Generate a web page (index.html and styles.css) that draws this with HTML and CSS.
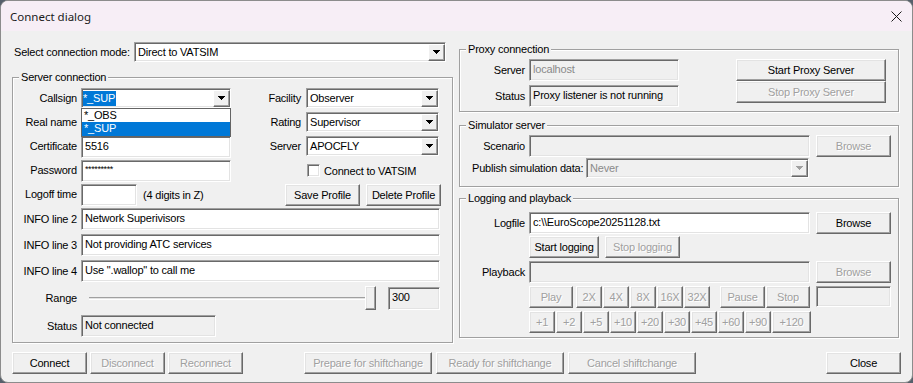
FILE: index.html
```html
<!DOCTYPE html>
<html lang="en">
<head>
    <meta charset="UTF-8">
    <title>Connect dialog</title>
    <link rel="stylesheet" href="styles.css">
</head>
<body>
<div class="window">
    <div class="titlebar">
        <span class="title">Connect dialog</span>
        <svg class="close" width="11" height="11" viewBox="0 0 11 11"><path d="M0.5 0.5L10.5 10.5M10.5 0.5L0.5 10.5" stroke="#1a1a1a" stroke-width="1"/></svg>
    </div>

    <div class="client">
        <div class="main">
            <!-- left side -->
            <div class="col-left">
                <div class="mode-row">
                    <span class="mode-label">Select connection mode:</span>
                    <div class="combo mode-combo"><span class="val">Direct to VATSIM</span><span class="arrow"><svg width="7" height="4"><path d="M0 0h7v1h-1v1h-1v1h-1v1h-1v-1h-1v-1h-1v-1h-1z"/></svg></span></div>
                </div>

                <div class="group server-group">
                    <div class="group-title">Server connection</div>
                    <div class="server-grid">
                        <span class="lbl">Callsign</span>
                        <div class="drop-cell">
                            <div class="combo"><span class="val sel">*_SUP</span><span class="arrow"><svg width="7" height="4"><path d="M0 0h7v1h-1v1h-1v1h-1v1h-1v-1h-1v-1h-1v-1h-1z"/></svg></span></div>
                            <ul class="droplist">
                                <li>*_OBS</li>
                                <li class="hi">*_SUP</li>
                            </ul>
                        </div>
                        <span class="lbl lbl2">Facility</span>
                        <div class="combo"><span class="val">Observer</span><span class="arrow"><svg width="7" height="4"><path d="M0 0h7v1h-1v1h-1v1h-1v1h-1v-1h-1v-1h-1v-1h-1z"/></svg></span></div>

                        <span class="lbl">Real name</span>
                        <div class="edit"></div>
                        <span class="lbl lbl2">Rating</span>
                        <div class="combo"><span class="val">Supervisor</span><span class="arrow"><svg width="7" height="4"><path d="M0 0h7v1h-1v1h-1v1h-1v1h-1v-1h-1v-1h-1v-1h-1z"/></svg></span></div>

                        <span class="lbl">Certificate</span>
                        <div class="edit">5516</div>
                        <span class="lbl lbl2">Server</span>
                        <div class="combo"><span class="val">APOCFLY</span><span class="arrow"><svg width="7" height="4"><path d="M0 0h7v1h-1v1h-1v1h-1v1h-1v-1h-1v-1h-1v-1h-1z"/></svg></span></div>

                        <span class="lbl">Password</span>
                        <div class="edit pw">*********</div>
                        <span></span>
                        <div class="check"><span class="box"></span>Connect to VATSIM</div>

                        <span class="lbl">Logoff time</span>
                        <div class="logoff"><div class="edit short"></div><span>(4 digits in Z)</span></div>
                        <div class="profile-btns">
                            <button class="btn">Save Profile</button>
                            <button class="btn">Delete Profile</button>
                        </div>
                    </div>

                    <div class="frow info"><span class="lbl">INFO line 2</span><div class="edit wide">Network Superivisors</div></div>
                    <div class="frow info"><span class="lbl">INFO line 3</span><div class="edit wide">Not providing ATC services</div></div>
                    <div class="frow info"><span class="lbl">INFO line 4</span><div class="edit wide">Use ".wallop" to call me</div></div>
                    <div class="frow range">
                        <span class="lbl">Range</span>
                        <div class="slider"><span class="track"></span><span class="thumb"></span></div>
                        <div class="edit ro value">300</div>
                    </div>
                    <div class="frow status"><span class="lbl">Status</span><div class="edit ro status-field">Not connected</div></div>
                </div>
            </div>

            <!-- right side -->
            <div class="col-right">
                <div class="group proxy-group">
                    <div class="group-title">Proxy connection</div>
                    <div class="proxy-body">
                        <div class="proxy-fields">
                            <div class="frow"><span class="rlbl">Server</span><div class="edit ro dim proxy-field">localhost</div></div>
                            <div class="frow"><span class="rlbl">Status</span><div class="edit ro proxy-field">Proxy listener is not running</div></div>
                        </div>
                        <div class="proxy-btns">
                            <button class="btn">Start Proxy Server</button>
                            <button class="btn" disabled>Stop Proxy Server</button>
                        </div>
                    </div>
                </div>

                <div class="group sim-group">
                    <div class="group-title">Simulator server</div>
                    <div class="frow scenario"><span class="rlbl">Scenario</span><div class="edit ro r-field"></div><button class="btn browse" disabled>Browse</button></div>
                    <div class="frow publish">
                        <span class="pub-label">Publish simulation data:</span>
                        <div class="combo off pub-combo"><span class="val">Never</span><span class="arrow"><svg width="7" height="4"><path d="M0 0h7v1h-1v1h-1v1h-1v1h-1v-1h-1v-1h-1v-1h-1z"/></svg></span></div>
                    </div>
                </div>

                <div class="group log-group">
                    <div class="group-title">Logging and playback</div>
                    <div class="frow logfile"><span class="rlbl">Logfile</span><div class="edit r-field">c:\\EuroScope20251128.txt</div><button class="btn browse">Browse</button></div>
                    <div class="btn-row log-btns">
                        <button class="btn start-log">Start logging</button>
                        <button class="btn stop-log" disabled>Stop logging</button>
                    </div>
                    <div class="frow playback"><span class="rlbl">Playback</span><div class="edit ro r-field"></div><button class="btn browse" disabled>Browse</button></div>
                    <div class="btn-row speed">
                        <button class="btn play" disabled>Play</button>
                        <button class="btn x" disabled>2X</button>
                        <button class="btn x" disabled>4X</button>
                        <button class="btn x" disabled>8X</button>
                        <button class="btn x" disabled>16X</button>
                        <button class="btn x" disabled>32X</button>
                        <button class="btn pause" disabled>Pause</button>
                        <button class="btn stop" disabled>Stop</button>
                        <div class="edit ro time-field"></div>
                    </div>
                    <div class="btn-row plus">
                        <button class="btn" disabled>+1</button>
                        <button class="btn" disabled>+2</button>
                        <button class="btn" disabled>+5</button>
                        <button class="btn" disabled>+10</button>
                        <button class="btn" disabled>+20</button>
                        <button class="btn" disabled>+30</button>
                        <button class="btn" disabled>+45</button>
                        <button class="btn" disabled>+60</button>
                        <button class="btn" disabled>+90</button>
                        <button class="btn wide-plus" disabled>+120</button>
                    </div>
                </div>
            </div>
        </div>

        <div class="footer">
            <button class="btn">Connect</button>
            <button class="btn" disabled>Disconnect</button>
            <button class="btn" disabled>Reconnect</button>
            <button class="btn shift first-shift" disabled>Prepare for shiftchange</button>
            <button class="btn shift" disabled>Ready for shiftchange</button>
            <button class="btn shift" disabled>Cancel shiftchange</button>
            <button class="btn close-btn">Close</button>
        </div>
    </div>
</div>
</body>
</html>
```

FILE: styles.css
```css
* {
    box-sizing: border-box;
}
body {
    margin: 0;
    background: #56606b;
    font-family: "Liberation Sans", Arial, sans-serif;
    font-size: 11px;
    letter-spacing: -0.2px;
    color: #000;
}
.window {
    width: 913px;
    height: 383px;
    border: 1px solid #8c8c8c;
    border-radius: 8px;
    overflow: hidden;
    background: #f0f0f0;
}
.titlebar {
    height: 30px;
    background: #f7eef6;
    display: flex;
    align-items: center;
    justify-content: space-between;
    padding: 0 10px 0 9px;
}
.title {
    font-family: "Noto Sans", sans-serif;
    font-size: 11.5px;
    letter-spacing: 0;
    color: #1a1a1a;
}
.client {
    padding: 11px 11px 0 11px;
}
.main {
    display: flex;
    gap: 6px;
}
.col-left {
    width: 441px;
}
.col-right {
    width: 440px;
}

/* common controls */
.edit {
    height: 22px;
    border: 1px solid;
    border-color: #a0a0a0 #fff #fff #a0a0a0;
    box-shadow: inset 1px 1px #696969, inset -1px -1px #e3e3e3;
    background: #fff;
    padding: 2px 3px;
    line-height: 14px;
    white-space: nowrap;
    overflow: hidden;
    flex: none;
}
.edit.ro {
    background: #f0f0f0;
}
.edit.dim {
    color: #8a8a8a;
}
.combo {
    height: 20px;
    display: flex;
    align-items: center;
    border: 1px solid;
    border-color: #a0a0a0 #fff #fff #a0a0a0;
    box-shadow: inset 1px 1px #696969, inset -1px -1px #e3e3e3;
    background: #fff;
    padding-left: 1px;
}
.combo .val {
    flex: 1;
    line-height: 15px;
    padding-left: 2px;
    white-space: nowrap;
}
.combo .val.sel {
    flex: none;
    padding: 0 1px 0 0;
    background: #0078d7;
    color: #fff;
}
.combo .arrow {
    margin-left: auto;
    width: 17px;
    height: 17px;
    display: flex;
    align-items: center;
    justify-content: center;
    border: 1px solid;
    border-color: #fff #696969 #696969 #fff;
    box-shadow: inset -1px -1px #a0a0a0;
    background: #f0f0f0;
}
.combo .arrow svg {
    fill: #000;
}
.combo.off {
    background: #f0f0f0;
    color: #8a8a8a;
}
.combo.off .arrow svg {
    fill: #a0a0a0;
}
.btn {
    height: 22px;
    padding: 0;
    border: 1px solid;
    border-color: #fff #696969 #696969 #fff;
    box-shadow: inset -1px -1px #a0a0a0, inset 1px 1px #e3e3e3;
    background: #f0f0f0;
    font-family: "Liberation Sans", Arial, sans-serif;
    font-size: 11px;
    letter-spacing: -0.2px;
    color: #000;
    white-space: nowrap;
    flex: none;
}
.btn:disabled {
    color: #a0a0a0;
    text-shadow: 1px 1px #fff;
}

/* group boxes */
.group {
    border: 1px solid #a0a0a0;
    box-shadow: inset 1px 1px #fff, 1px 1px #fff;
}
.group-title {
    width: max-content;
    margin: -7px 0 0 6px;
    padding: 0 2px;
    line-height: 13px;
    background: #f0f0f0;
}
.frow {
    display: flex;
    align-items: center;
}

/* left column */
.mode-row {
    display: flex;
    align-items: center;
    height: 20px;
}
.mode-label {
    width: 122px;
    padding-left: 2px;
}
.mode-combo {
    width: 312px;
}
.server-group {
    margin-top: 15px;
    padding-bottom: 5px;
}
.server-grid {
    display: grid;
    grid-template-columns: 68px 150px 75px 135px;
    grid-auto-rows: 24px;
    align-items: start;
    margin-top: 4px;
}
.lbl {
    text-align: right;
    padding-right: 4px;
    line-height: 21px;
    white-space: nowrap;
}
.frow .lbl {
    width: 68px;
    flex: none;
}
.lbl2 {
    padding-right: 5px;
    line-height: 20px;
}
.server-grid .combo {
    width: 133px;
}
.drop-cell {
    position: relative;
}
.drop-cell .combo {
    width: 150px;
}
.droplist {
    position: absolute;
    top: 20px;
    left: 0;
    width: 150px;
    margin: 0;
    padding: 0;
    list-style: none;
    border: 1px solid #646464;
    background: #fff;
    z-index: 2;
}
.droplist li {
    height: 13px;
    line-height: 13px;
    padding-left: 2px;
}
.droplist li.hi {
    height: 14px;
    background: #0078d7;
    color: #fff;
}
.server-grid .edit {
    width: 150px;
}
.pw {
    font-size: 9px;
    letter-spacing: -0.4px;
    line-height: 12px;
}
.check {
    display: flex;
    align-items: center;
    height: 21px;
    padding-left: 1px;
}
.check .box {
    width: 13px;
    height: 13px;
    margin-right: 4px;
    border: 1px solid;
    border-color: #a0a0a0 #fff #fff #a0a0a0;
    box-shadow: inset 1px 1px #696969, inset -1px -1px #e3e3e3;
    background: #fff;
}
.logoff {
    display: flex;
    align-items: center;
    gap: 6px;
    grid-column: 2 / 3;
}
.server-grid .edit.short {
    width: 56px;
}
.profile-btns {
    grid-column: 3 / 5;
    display: flex;
    justify-content: flex-end;
    gap: 6px;
}
.profile-btns .btn {
    width: 75px;
}
.info {
    height: 22px;
    margin-bottom: 4px;
}
.info .edit.wide {
    width: 359px;
}
.range {
    height: 24px;
    margin-bottom: 5px;
}
.slider {
    width: 300px;
    display: flex;
    align-items: center;
}
.track {
    width: 276px;
    margin-left: 8px;
    height: 3px;
    border-top: 1px solid #a0a0a0;
    border-bottom: 1px solid #fff;
    background: #e3e3e3;
}
.thumb {
    width: 11px;
    height: 24px;
    border: 1px solid;
    border-color: #fff #696969 #696969 #fff;
    box-shadow: inset -1px -1px #a0a0a0, inset 1px 1px #e3e3e3;
    background: #f0f0f0;
}
.edit.value {
    width: 52px;
    height: 23px;
    margin-left: 7px;
}
.status {
    height: 22px;
}
.status-field {
    width: 135px;
}

/* right column */
.rlbl {
    width: 69px;
    flex: none;
    padding-right: 4px;
    text-align: right;
    white-space: nowrap;
}
.proxy-group {
    margin-top: 7px;
}
.proxy-body {
    display: flex;
    justify-content: space-between;
    margin-top: 3px;
    padding: 0 12px 4px 0;
}
.proxy-fields {
    display: flex;
    flex-direction: column;
    gap: 4px;
}
.proxy-field {
    width: 150px;
}
.proxy-btns {
    display: flex;
    flex-direction: column;
}
.proxy-btns .btn {
    width: 150px;
}
.sim-group {
    margin-top: 13px;
    padding-bottom: 8px;
}
.scenario {
    margin-top: 3px;
}
.r-field {
    width: 281px;
}
.browse {
    width: 75px;
    margin-left: 6px;
}
.publish {
    margin-top: 1px;
}
.pub-label {
    width: 126px;
    padding-left: 12px;
    white-space: nowrap;
}
.pub-combo {
    width: 223px;
}
.log-group {
    margin-top: 11px;
    padding-bottom: 4px;
}
.logfile {
    margin-top: 7px;
}
.btn-row {
    display: flex;
    padding-left: 69px;
}
.log-btns {
    margin-top: 2px;
    gap: 6px;
}
.start-log {
    width: 70px;
}
.stop-log {
    width: 75px;
}
.playback {
    margin-top: 3px;
}
.speed {
    margin-top: 3px;
    gap: 1px;
}
.speed .play {
    width: 44px;
    margin-right: 2px;
}
.speed .x {
    width: 26px;
}
.speed .pause {
    width: 45px;
    margin-left: 9px;
}
.speed .stop {
    width: 44px;
}
.edit.time-field {
    width: 75px;
    height: 21px;
    margin-left: 5px;
}
.plus {
    margin-top: 3px;
    gap: 1px;
}
.plus .btn {
    width: 26px;
}
.plus .wide-plus {
    width: 39px;
}

/* bottom buttons */
.footer {
    display: flex;
    gap: 3px;
    margin-top: 9px;
}
.footer .btn {
    width: 75px;
}
.footer .shift {
    width: 128px;
    margin-left: 1px;
}
.footer .first-shift {
    margin-left: 58px;
}
.footer .close-btn {
    margin-left: auto;
}
```
